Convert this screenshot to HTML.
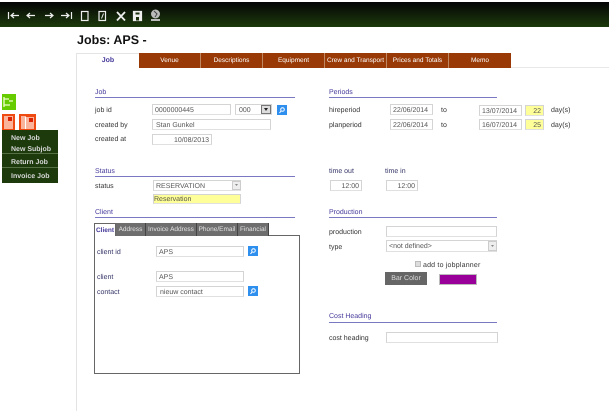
<!DOCTYPE html>
<html><head><meta charset="utf-8"><style>
html,body{margin:0;padding:0;width:609px;height:413px;overflow:hidden;background:#fff;font-family:"Liberation Sans",sans-serif;text-rendering:geometricPrecision}
#w{position:absolute;left:0;top:0;width:609px;height:413px;overflow:hidden;filter:blur(.35px)}
#w div,#w svg{position:absolute;box-sizing:border-box}
.t{font-size:7px;line-height:10px;height:10px;color:#333;white-space:nowrap;margin-top:2px}
.h{font-size:7px;line-height:10px;height:10px;color:#44399a;white-space:nowrap;margin-top:2px}
.l{height:1px;background:#7a78c0}
.i{border:1px solid #d4d4d4;border-bottom-color:#e0e0e0;background:#fff;font-size:7px;line-height:11px;color:#555;padding-left:2px;white-space:nowrap}
.r{text-align:right;padding:0 2px 0 0}
.y{background:#ffff99}
.b{background:#2f8fef;width:10px;height:10px}
.mt{font-size:6.5px;color:#fff;text-align:center;white-space:nowrap;background:#993a06;top:53px;width:62px;border-right:1px solid #c08860;height:15px;line-height:15px}
.ct{top:223px;height:13px;background:#6e6e6e;color:#e4e4e4;font-size:6.5px;line-height:13px;text-align:center;white-space:nowrap;border-right:1px solid #444}
.mi{left:2px;width:56px;color:#d8d8d8;font-size:7px;font-weight:bold;white-space:nowrap;padding-left:9px;line-height:10px;height:10px}
</style></head><body><div id="w">
<div style="left:0;top:2px;width:609px;height:25px;background:linear-gradient(#050505,#1c3a0c)"></div>
<svg style="left:0;top:2px" width="170" height="25" viewBox="0 0 170 25" fill="none" stroke="#eee" stroke-width="1.2">
<path d="M8.5 10v7M11 13.500h8M14 11l-3 2.500 3 2.500"/>
<path d="M27 13.500h8M30 11l-3 2.500 3 2.500"/>
<path d="M53 13.500h-8M50 11l3 2.500-3 2.500"/>
<path d="M69 13.500h-8M66 11l3 2.500-3 2.500M71.500 10v7"/>
<rect x="81.500" y="9.500" width="6.500" height="9"/>
<rect x="99" y="9.500" width="6.500" height="9"/><path d="M101.500 16.500l2-5" stroke-width="1"/>
<path d="M117 10l8 8.500M125 10l-8 8.500" stroke-width="1.800"/>
<path d="M133.500 9.500h8v9h-8z" fill="#eee"/><path d="M135.500 10.500h4v2h-4zM136 15h3v3.500h-3z" fill="#1c300c" stroke="none"/>
<circle cx="155.500" cy="12" r="4.500" fill="#bbb" stroke="none"/><path d="M151 17h9v2h-9z" fill="#bbb" stroke="none"/><path d="M154 9l3 3-2 3" stroke="#444" stroke-width="1"/>
</svg>
<div style="left:77px;top:32px;font-size:12.500px;line-height:17px;height:17px;font-weight:bold;color:#111;white-space:nowrap">Jobs: APS -</div>
<div style="left:76px;top:53px;width:1px;height:358px;background:#e4e4e4"></div>
<div style="left:77px;top:53px;width:62px;height:1px;background:#e4e4e4"></div>
<div style="left:511px;top:67px;width:98px;height:1px;background:#e8e8e8"></div>
<div class="t" style="left:77px;top:54px;width:62px;text-align:center;color:#44399a;font-weight:bold;margin-top:2px">Job</div>
<div class="mt" style="left:139px">Venue</div>
<div class="mt" style="left:201px">Descriptions</div>
<div class="mt" style="left:263px">Equipment</div>
<div class="mt" style="left:325px">Crew and Transport</div>
<div class="mt" style="left:387px">Prices and Totals</div>
<div class="mt" style="left:449px;border-right:0">Memo</div>

<div style="left:2px;top:94px;width:14px;height:16px;background:#66cc00"></div>
<svg style="left:2px;top:94px" width="14" height="16" fill="none" stroke="#eeffcc"><path d="M2 3v10M2 5h5M2 11h6M7 7h4" stroke-width="1.300"/></svg>
<div style="left:2px;top:114px;width:13px;height:16px;background:#ee4a12"></div>
<div style="left:4px;top:116px;width:9px;height:13px;background:#fbb49c"></div>
<div style="left:8px;top:117px;width:4px;height:4px;background:#dd2200"></div>
<div style="left:19px;top:114px;width:17px;height:17px;background:#ee4a12"></div>
<div style="left:21px;top:116px;width:5px;height:13px;background:#fbb49c"></div>
<div style="left:25px;top:117px;width:9px;height:12px;background:#fbb49c;border-left:1px solid #fff"></div>
<div style="left:29px;top:118px;width:4px;height:4px;background:#dd2200"></div>
<div style="left:2px;top:130px;width:56px;height:53px;background:#1c3a0c"></div>
<div style="left:2px;top:153px;width:56px;height:1px;background:#557044"></div>
<div style="left:2px;top:167px;width:56px;height:1px;background:#557044"></div>
<div class="mi" style="top:134px">New Job</div>
<div class="mi" style="top:145px">New Subjob</div>
<div class="mi" style="top:158px">Return Job</div>
<div class="mi" style="top:172px">Invoice Job</div>

<div class="h" style="left:95px;top:86px">Job</div><div class="l" style="left:95px;top:97px;width:200px"></div>
<div class="t" style="left:95px;top:104px">job id</div>
<div class="i" style="left:152px;top:104px;width:79px;height:11px">0000000445</div>
<div class="i" style="left:235px;top:104px;width:37px;height:11px;padding-left:3px">000</div>
<div style="left:261px;top:105px;width:10px;height:9px;background:#ddd;border:1px solid #777"></div>
<svg style="left:263px;top:108px" width="6" height="4"><path d="M1 0h4L3 3z" fill="#222"/></svg>
<div class="b" style="left:277px;top:105px"></div>
<svg style="left:277px;top:105px" width="10" height="10" fill="none" stroke="#fff"><circle cx="5.500" cy="4.500" r="1.800"/><path d="M4 6L2.500 8"/></svg>
<div class="t" style="left:95px;top:119px">created by</div>
<div class="i" style="left:152px;top:119px;width:119px;height:11px;padding-left:3px">Stan Gunkel</div>
<div class="t" style="left:95px;top:133px">created at</div>
<div class="i r" style="left:152px;top:134px;width:60px;height:11px">10/08/2013</div>

<div class="h" style="left:329px;top:86px">Periods</div><div class="l" style="left:329px;top:97px;width:168px"></div>
<div class="t" style="left:329px;top:104px">hireperiod</div>
<div class="i" style="left:390px;top:104px;width:43px;height:11px">22/06/2014</div>
<div class="t" style="left:441px;top:104px">to</div>
<div class="i" style="left:479px;top:105px;width:43px;height:11px">13/07/2014</div>
<div class="i r y" style="left:525px;top:105px;width:19px;height:11px">22</div>
<div class="t" style="left:551px;top:104px">day(s)</div>
<div class="t" style="left:329px;top:119px">planperiod</div>
<div class="i" style="left:390px;top:119px;width:43px;height:11px">22/06/2014</div>
<div class="t" style="left:441px;top:119px">to</div>
<div class="i" style="left:479px;top:119px;width:43px;height:11px">16/07/2014</div>
<div class="i r y" style="left:525px;top:119px;width:19px;height:11px">25</div>
<div class="t" style="left:551px;top:119px">day(s)</div>

<div class="h" style="left:95px;top:165px">Status</div><div class="l" style="left:95px;top:176px;width:200px"></div>
<div class="t" style="left:95px;top:180px">status</div>
<div class="i" style="left:153px;top:180px;width:88px;height:11px;padding-left:2px">RESERVATION</div>
<div style="left:232px;top:181px;width:9px;height:9px;background:#eee;border:1px solid #ccc"></div>
<svg style="left:234px;top:184px" width="5" height="3"><path d="M1 0h3L2.500 2z" fill="#888"/></svg>
<div class="i y" style="left:153px;top:194px;width:88px;height:10px;padding-left:0;line-height:9px;color:#554">Reservation</div>

<div class="h" style="left:95px;top:206px">Client</div><div class="l" style="left:95px;top:217px;width:200px"></div>
<div style="left:94px;top:235px;width:206px;height:139px;border:1px solid #666;background:#fff"></div>
<div class="ct" style="left:94px;width:22px;background:#fff;color:#44399a;font-weight:bold;border:1px solid #666;border-bottom:0">Client</div>
<div class="ct" style="left:116px;width:30px">Address</div>
<div class="ct" style="left:146px;width:51px">Invoice Address</div>
<div class="ct" style="left:197px;width:41px">Phone/Email</div>
<div class="ct" style="left:238px;width:31px">Financial</div>
<div class="t" style="left:97px;top:246px;color:#333366">client id</div>
<div class="i" style="left:156px;top:246px;width:88px;height:11px">APS</div>
<div class="b" style="left:248px;top:246px"></div>
<svg style="left:248px;top:246px" width="10" height="10" fill="none" stroke="#fff"><circle cx="5.500" cy="4.500" r="1.800"/><path d="M4 6L2.500 8"/></svg>
<div class="t" style="left:97px;top:271px;color:#333366">client</div>
<div class="i" style="left:156px;top:271px;width:88px;height:11px">APS</div>
<div class="t" style="left:97px;top:286px;color:#333366">contact</div>
<div class="i" style="left:156px;top:286px;width:88px;height:11px;padding-left:3px">nieuw contact</div>
<div class="b" style="left:248px;top:286px"></div>
<svg style="left:248px;top:286px" width="10" height="10" fill="none" stroke="#fff"><circle cx="5.500" cy="4.500" r="1.800"/><path d="M4 6L2.500 8"/></svg>

<div class="t" style="left:329px;top:165px;color:#333366">time out</div>
<div class="t" style="left:385px;top:165px;color:#333366">time in</div>
<div class="i r" style="left:330px;top:180px;width:32px;height:11px">12:00</div>
<div class="i r" style="left:386px;top:180px;width:32px;height:11px">12:00</div>

<div class="h" style="left:329px;top:206px">Production</div><div class="l" style="left:329px;top:217px;width:168px"></div>
<div class="t" style="left:329px;top:226px">production</div>
<div class="i" style="left:386px;top:226px;width:111px;height:11px"></div>
<div class="t" style="left:329px;top:241px">type</div>
<div class="i" style="left:386px;top:240px;width:111px;height:12px;line-height:11px">&lt;not defined&gt;</div>
<div style="left:488px;top:241px;width:9px;height:10px;background:#eee;border:1px solid #ccc"></div>
<svg style="left:490px;top:245px" width="5" height="3"><path d="M1 0h3L2.500 2z" fill="#888"/></svg>
<div style="left:415px;top:261px;width:6px;height:6px;background:#ddd;border:1px solid #bbb"></div>
<div class="t" style="left:423px;top:259px;letter-spacing:.2px">add to jobplanner</div>
<div style="left:385px;top:272px;width:42px;height:13px;background:#666;color:#ddd;font-size:7px;line-height:13px;text-align:center;white-space:nowrap">Bar Color</div>
<div style="left:439px;top:274px;width:38px;height:11px;background:#990099;border:1px solid #bbb"></div>

<div class="h" style="left:329px;top:310px">Cost Heading</div><div class="l" style="left:329px;top:322px;width:168px"></div>
<div class="t" style="left:329px;top:332px">cost heading</div>
<div class="i" style="left:386px;top:332px;width:112px;height:11px"></div>
</div></body></html>
